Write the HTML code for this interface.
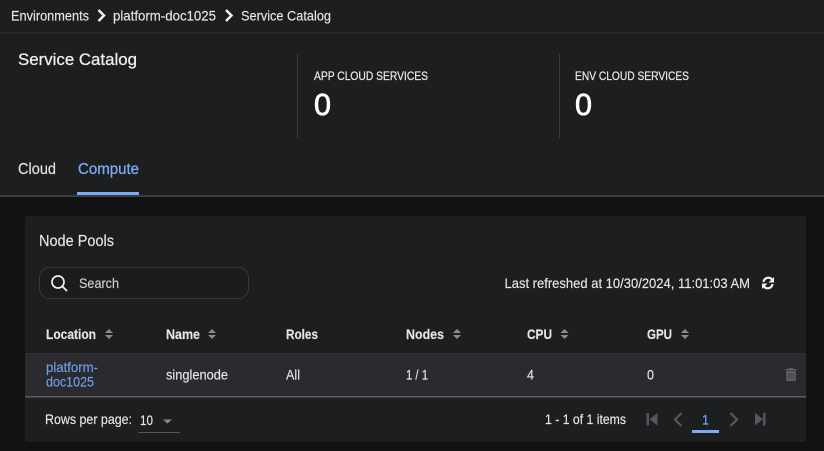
<!DOCTYPE html>
<html>
<head>
<meta charset="utf-8">
<style>
html,body{margin:0;padding:0;background:#121212;width:824px;height:451px;overflow:hidden}
svg{display:block;filter:blur(.3px)}
text{font-family:"Liberation Sans",sans-serif;fill:#e6e6e6;stroke:#e6e6e6;stroke-width:.15px}
</style>
</head>
<body>
<svg width="824" height="451" viewBox="0 0 824 451" xmlns="http://www.w3.org/2000/svg">
<rect width="824" height="451" fill="#121212"/>
<rect width="824" height="196" fill="#1d1e20"/>
<rect y="32" width="824" height="2" fill="#27282a"/>
<rect y="195" width="824" height="2" fill="#3a3b3d"/>

<g font-size="14">
<text x="11" y="20.500" textLength="78" lengthAdjust="spacingAndGlyphs">Environments</text>
<path d="M98.500 10l5.500 5.500-5.500 5.500" fill="none" stroke="#eee" stroke-width="2.500"/>
<text x="113" y="20.500" textLength="103" lengthAdjust="spacingAndGlyphs">platform-doc1025</text>
<path d="M226 10l5.500 5.500-5.500 5.500" fill="none" stroke="#eee" stroke-width="2.500"/>
<text x="241" y="20.500" textLength="90" lengthAdjust="spacingAndGlyphs">Service Catalog</text>
</g>

<text x="18" y="65" font-size="17" textLength="119" lengthAdjust="spacingAndGlyphs" style="fill:#f0f0f0;stroke:#f0f0f0;stroke-width:.25px">Service Catalog</text>
<rect x="297" y="54" width="1" height="84" fill="#3a3b3d"/>
<rect x="559" y="54" width="1" height="84" fill="#3a3b3d"/>
<text x="314" y="80" font-size="12" textLength="114" lengthAdjust="spacingAndGlyphs" style="stroke-width:.25px">APP CLOUD SERVICES</text>
<text x="575" y="80" font-size="12" textLength="114" lengthAdjust="spacingAndGlyphs" style="stroke-width:.25px">ENV CLOUD SERVICES</text>
<text x="314" y="115" font-size="31" textLength="17" lengthAdjust="spacingAndGlyphs" style="fill:#fff;stroke:#fff;stroke-width:.7px">0</text>
<text x="575" y="115" font-size="31" textLength="17" lengthAdjust="spacingAndGlyphs" style="fill:#fff;stroke:#fff;stroke-width:.7px">0</text>

<text x="18" y="174" font-size="16" textLength="38" lengthAdjust="spacingAndGlyphs">Cloud</text>
<text x="78" y="174" font-size="16" textLength="61" lengthAdjust="spacingAndGlyphs" style="fill:#7cabf5;stroke:#7cabf5;stroke-width:.3px">Compute</text>
<rect x="77" y="192" width="62" height="3" fill="#7cabf5"/>

<rect x="25" y="216" width="781" height="226" rx="2" fill="#1d1e20"/>
<text x="39" y="246" font-size="16" textLength="75" lengthAdjust="spacingAndGlyphs">Node Pools</text>

<rect x="39.500" y="267.500" width="209" height="31" rx="10" fill="#1b1c1e" stroke="#38393b"/>
<circle cx="58" cy="282" r="6" fill="none" stroke="#eee" stroke-width="1.700"/>
<path d="M62.500 286.500L67 291" stroke="#eee" stroke-width="1.900" fill="none"/>
<text x="79" y="288" font-size="14" textLength="40" lengthAdjust="spacingAndGlyphs" style="fill:#cfcfcf;stroke:#cfcfcf">Search</text>

<text x="504.500" y="288" font-size="14" textLength="245.500" lengthAdjust="spacingAndGlyphs">Last refreshed at 10/30/2024, 11:01:03 AM</text>
<g fill="none" stroke="#eee" stroke-width="2.200">
<path d="M763.500 282a4.800 4.800 0 0 1 8.500-2.500"/>
<path d="M772.500 284a4.800 4.800 0 0 1-8.500 2.500"/>
</g>
<path d="M774 277v5.500h-5.500zM762 289v-5.500h5.500z" fill="#eee"/>

<rect x="25" y="353" width="781" height="1" fill="#2f3032"/>
<rect x="25" y="354" width="781" height="42" fill="#2a2a2f"/>
<rect x="25" y="396" width="781" height="1.500" fill="#5c5d60"/>

<g font-size="14" font-weight="bold">
<text x="46" y="339" textLength="50" lengthAdjust="spacingAndGlyphs">Location</text>
<text x="166" y="339" textLength="34" lengthAdjust="spacingAndGlyphs">Name</text>
<text x="286" y="339" textLength="32" lengthAdjust="spacingAndGlyphs">Roles</text>
<text x="406" y="339" textLength="38" lengthAdjust="spacingAndGlyphs">Nodes</text>
<text x="527" y="339" textLength="25" lengthAdjust="spacingAndGlyphs">CPU</text>
<text x="647" y="339" textLength="25" lengthAdjust="spacingAndGlyphs">GPU</text>
</g>
<g fill="#8a8b8d">
<path d="M105 333l4-4 4 4zM105 335l4 4 4-4z"/>
<path d="M208 333l4-4 4 4zM208 335l4 4 4-4z"/>
<path d="M453 333l4-4 4 4zM453 335l4 4 4-4z"/>
<path d="M560.500 333l4-4 4 4zM560.500 335l4 4 4-4z"/>
<path d="M681 333l4-4 4 4zM681 335l4 4 4-4z"/>
</g>

<g font-size="14">
<text x="46" y="372" textLength="52" lengthAdjust="spacingAndGlyphs" style="fill:#6f9fea;stroke:#6f9fea">platform-</text>
<text x="46" y="386.500" textLength="48" lengthAdjust="spacingAndGlyphs" style="fill:#6f9fea;stroke:#6f9fea">doc1025</text>
<text x="166" y="379.500" textLength="62" lengthAdjust="spacingAndGlyphs">singlenode</text>
<text x="286" y="379.500" textLength="14" lengthAdjust="spacingAndGlyphs">All</text>
<text x="406" y="379.500" textLength="22" lengthAdjust="spacingAndGlyphs">1 / 1</text>
<text x="527" y="379.500" textLength="7" lengthAdjust="spacingAndGlyphs">4</text>
<text x="647" y="379.500" textLength="7" lengthAdjust="spacingAndGlyphs">0</text>
</g>
<path d="M785.500 369h3l.8-1h3.400l.8 1h3v1.500h-11zM786.300 371.300h9.400v9.700h-9.400z" fill="#626367"/>
<path d="M788.800 373v6.500M791 373v6.500M793.200 373v6.500" stroke="#2a2a2f" stroke-width=".7"/>

<text x="45" y="424" font-size="14" textLength="87" lengthAdjust="spacingAndGlyphs">Rows per page:</text>
<text x="140" y="425" font-size="14" textLength="13" lengthAdjust="spacingAndGlyphs">10</text>
<path d="M163 419.500h9l-4.500 4z" fill="#8a8b8d"/>
<rect x="138" y="432" width="42" height="1" fill="#55565a"/>
<text x="545" y="424" font-size="14" textLength="81" lengthAdjust="spacingAndGlyphs">1 - 1 of 1 items</text>

<g fill="#56575a">
<path d="M646.500 413h2.500v12.500h-2.500zM657.500 413v12.500l-8-6.250z"/>
<path d="M755 413v12.500l8-6.250zM763 413h2.500v12.500h-2.500z"/>
</g>
<g fill="none" stroke="#56575a" stroke-width="2.200">
<path d="M681.500 413l-6.500 6.500 6.500 6.500"/>
<path d="M730.500 413l6.500 6.500-6.500 6.500"/>
</g>
<text x="702" y="424.500" font-size="14" textLength="7" lengthAdjust="spacingAndGlyphs" style="fill:#7cabf5;stroke:#7cabf5">1</text>
<rect x="692" y="430" width="27" height="3" fill="#7cabf5"/>
</svg>
</body>
</html>
